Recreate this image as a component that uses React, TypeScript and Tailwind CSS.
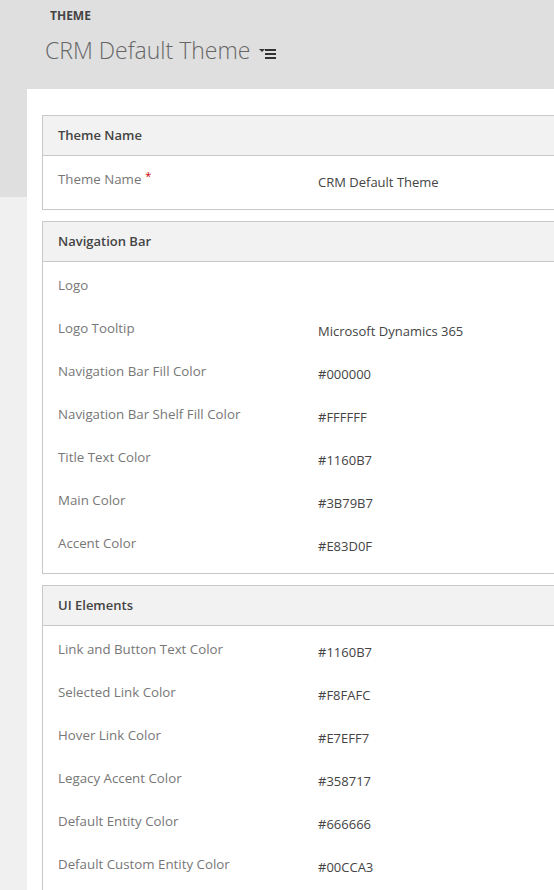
import React from 'react';

type Row = { label: string; value?: string; required?: boolean };

const sections: { title: string; rows: Row[] }[] = [
  {
    title: 'Theme Name',
    rows: [{ label: 'Theme Name', value: 'CRM Default Theme', required: true }],
  },
  {
    title: 'Navigation Bar',
    rows: [
      { label: 'Logo' },
      { label: 'Logo Tooltip', value: 'Microsoft Dynamics 365' },
      { label: 'Navigation Bar Fill Color', value: '#000000' },
      { label: 'Navigation Bar Shelf Fill Color', value: '#FFFFFF' },
      { label: 'Title Text Color', value: '#1160B7' },
      { label: 'Main Color', value: '#3B79B7' },
      { label: 'Accent Color', value: '#E83D0F' },
    ],
  },
  {
    title: 'UI Elements',
    rows: [
      { label: 'Link and Button Text Color', value: '#1160B7' },
      { label: 'Selected Link Color', value: '#F8FAFC' },
      { label: 'Hover Link Color', value: '#E7EFF7' },
      { label: 'Legacy Accent Color', value: '#358717' },
      { label: 'Default Entity Color', value: '#666666' },
      { label: 'Default Custom Entity Color', value: '#00CCA3' },
    ],
  },
];

function MenuIcon() {
  return (
    <svg width="18" height="12" viewBox="0 0 18 12" className="text-[#333]">
      <path d="M0 2h6l-3 3z" fill="currentColor" />
      <rect x="6" y="2" width="11" height="2" fill="currentColor" />
      <rect x="6" y="6" width="11" height="2" fill="currentColor" />
      <rect x="6" y="10" width="11" height="2" fill="currentColor" />
    </svg>
  );
}

export default function App() {
  return (
    <div
      className="w-[554px] h-[890px] overflow-hidden bg-[#f0f0f0]"
      style={{ fontFamily: '"Open Sans", "Noto Sans", sans-serif' }}
    >
      {/* Header */}
      <div className="h-[89px] bg-[#dfdfdf] pl-[50px] pt-[8px]">
        <div className="text-[12px] font-bold leading-[16px] text-[#444]">THEME</div>
        <div className="-ml-[5px] mt-[11px] flex items-center gap-[9px]">
          <span className="text-[23px] font-light leading-[30px] text-[#666]">CRM Default Theme</span>
          <span className="mt-[5px]">
            <MenuIcon />
          </span>
        </div>
      </div>

      <div className="flex">
        <div className="w-[27px] shrink-0">
          <div className="h-[108px] bg-[#dfdfdf]" />
        </div>

        {/* Form panel */}
        <div className="w-[600px] shrink-0 bg-white pl-[15px] pt-[26px] h-[801px]">
          {sections.map((s) => (
            <div key={s.title} className="mb-[11px] border border-[#c8c8c8]">
              <div className="h-[40px] border-b border-[#c8c8c8] bg-[#f2f2f2] pl-[15px] flex items-center">
                <span className="text-[13px] font-semibold text-[#444]">{s.title}</span>
              </div>
              <div className="pt-[10px]">
                {s.rows.map((r, i) => (
                  <div key={i} className="h-[43px] flex pl-[15px]">
                    <div className="w-[260px] pt-[3px] text-[13.3px] leading-[20px] text-[#777]">
                      {r.label}
                      {r.required && <span className="ml-[4px] align-top text-[11px] leading-[14px] text-[#c00]">*</span>}
                    </div>
                    <div className="pt-[6px] text-[13px] leading-[20px] text-[#444]">{r.value}</div>
                  </div>
                ))}
              </div>
            </div>
          ))}
        </div>
      </div>
    </div>
  );
}
